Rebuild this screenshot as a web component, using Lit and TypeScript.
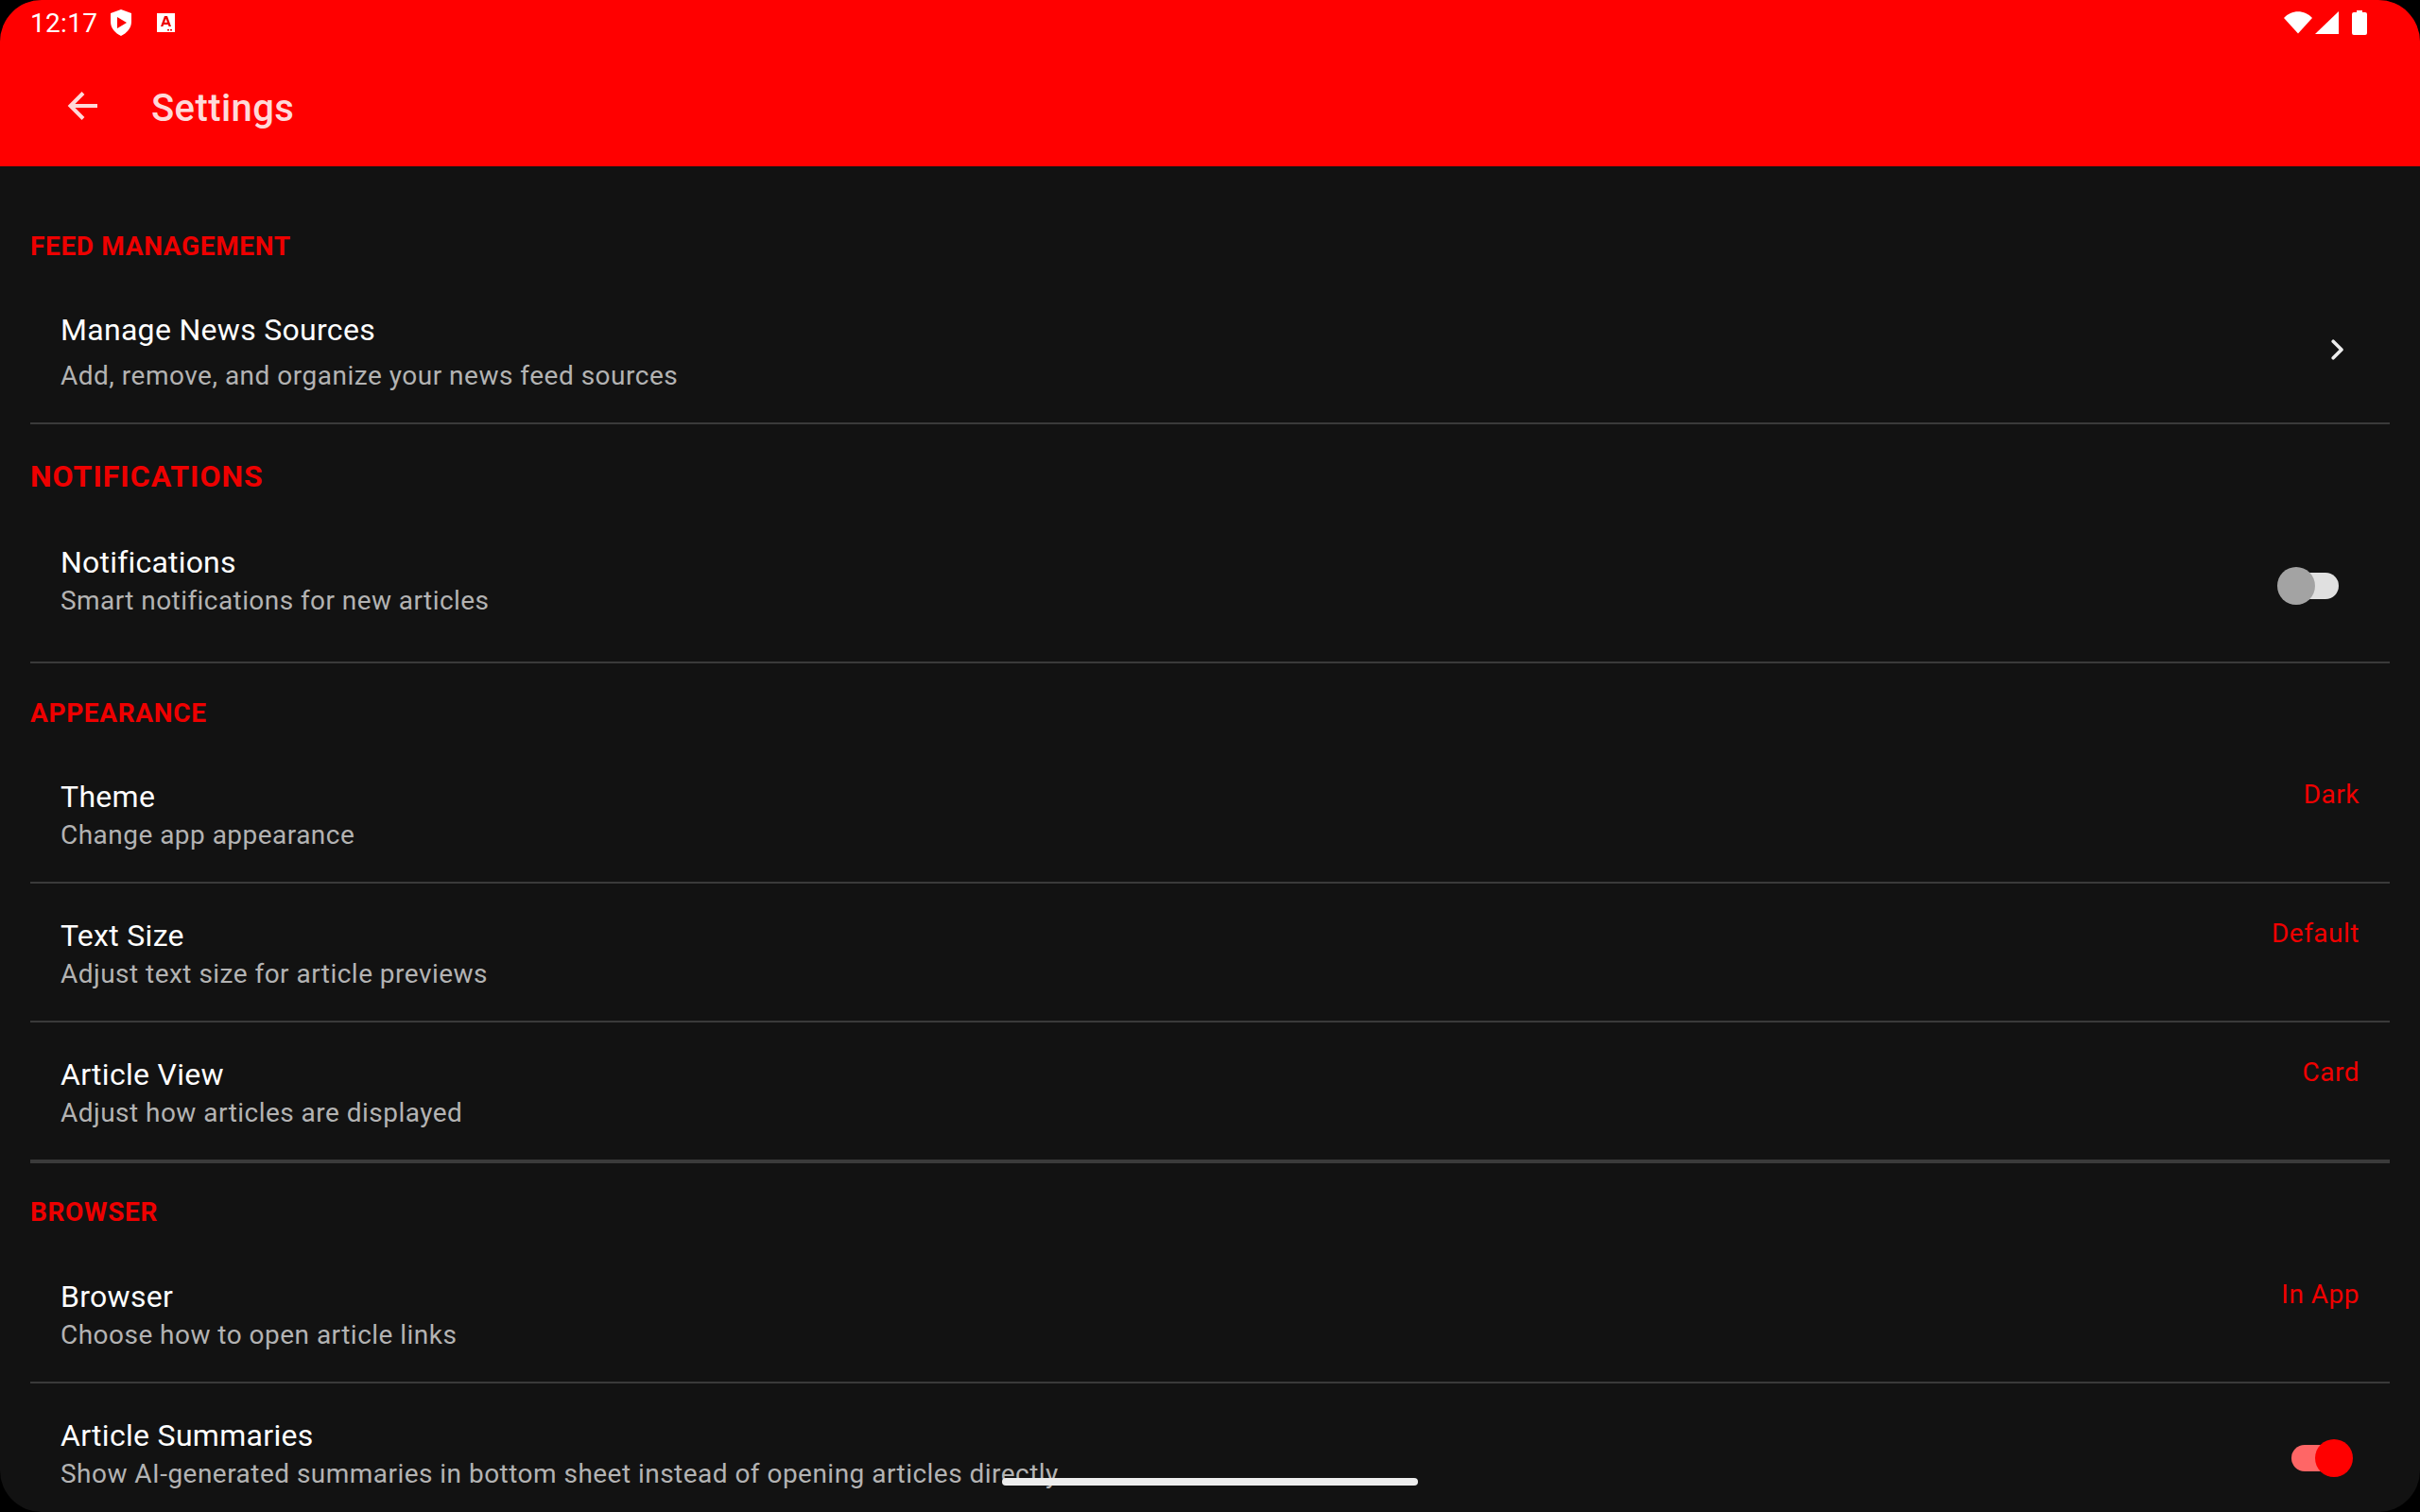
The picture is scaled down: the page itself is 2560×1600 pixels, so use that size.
import { LitElement, html, css, nothing } from "lit";
import { customElement } from "lit/decorators.js";

type Row = { t: string; s: string; cls: string; v?: string; kind?: "chev" | "off" | "on" };

const sections: { h: string; hc?: string; cls: string; rows: Row[] }[] = [
  { h: "FEED MANAGEMENT", cls: "s1", rows: [{ t: "Manage News Sources", s: "Add, remove, and organize your news feed sources", cls: "r-manage", kind: "chev" }] },
  { h: "NOTIFICATIONS", hc: "big", cls: "s2", rows: [{ t: "Notifications", s: "Smart notifications for new articles", cls: "r-notif", kind: "off" }] },
  {
    h: "APPEARANCE", cls: "s3", rows: [
      { t: "Theme", s: "Change app appearance", cls: "r", v: "Dark" },
      { t: "Text Size", s: "Adjust text size for article previews", cls: "r", v: "Default" },
      { t: "Article View", s: "Adjust how articles are displayed", cls: "r", v: "Card" },
    ],
  },
  {
    h: "BROWSER", cls: "s4", rows: [
      { t: "Browser", s: "Choose how to open article links", cls: "r", v: "In App" },
      { t: "Article Summaries", s: "Show AI-generated summaries in bottom sheet instead of opening articles directly", cls: "r r-sum", kind: "on" },
    ],
  },
];

@customElement("app-root")
export class AppRoot extends LitElement {
  static styles = css`
    :host { display: block; width: 2560px; height: 1600px; background: #000; font-family: Roboto, "Liberation Sans", sans-serif; }
    .screen { position: relative; width: 2560px; height: 1600px; background: #121212; border-radius: 44px; overflow: hidden; display: flex; flex-direction: column; }
    .header { background: #ff0000; height: 176px; flex: none; display: flex; flex-direction: column; }
    .status { height: 48px; padding: 0 56px 0 32px; display: flex; align-items: center; color: #fff; font-size: 28px; box-sizing: border-box; }
    .time { letter-spacing: 0.3px; width: 84px; }
    .status .right { margin-left: auto; display: flex; align-items: center; }
    .aw { margin-left: 26px; }
    .signal { margin-left: 3px; }
    .batt { margin-left: 14px; }
    .toolbar { flex: 1; display: flex; align-items: center; padding-left: 71px; color: #ffd9d9; }
    .toolbar span { font-size: 40px; font-weight: 500; margin-left: 57px; line-height: 48px; letter-spacing: 0.4px; padding-top: 6px; }
    .list { padding: 0 32px; display: flex; flex-direction: column; }
    .sec-h { color: #ee0000; font-size: 28px; font-weight: 700; line-height: 34px; letter-spacing: 0.65px; }
    .sec-h.big { font-size: 32px; line-height: 38px; letter-spacing: 1px; }
    .s1 .sec-h { margin-top: 68px; }
    .s2 .sec-h { margin-top: 36px; }
    .s3 .sec-h { margin-top: 36px; margin-bottom: 1px; }
    .s4 .sec-h { margin-top: 35px; margin-bottom: 2px; }
    .row { display: flex; align-items: flex-start; padding: 0 32px; box-sizing: border-box; border-bottom: 2px solid #3a3a3a; }
    .r-sum { border-bottom: none; }
    .texts { flex: 1; min-width: 0; }
    .t { color: #fff; font-size: 32px; line-height: 40px; letter-spacing: 0.3px; }
    .st { color: #b3b3b3; font-size: 28px; line-height: 36px; letter-spacing: 0.47px; white-space: nowrap; }
    .val { color: #f00000; font-size: 28px; line-height: 36px; letter-spacing: 0.5px; }
    .r { height: 147px; padding-top: 35px; }
    .r .st { margin-top: 3px; }
    .r .val { margin-top: 0; }
    .s3 .sec-h + .row { height: 162px; padding-top: 50px; }
    .s4 .sec-h + .row { height: 162px; padding-top: 50px; }
    .s3 .row:last-child { height: 149px; border-bottom-width: 4px; }
    .r-manage { height: 171px; padding-top: 51px; }
    .r-manage .st { margin-top: 11px; letter-spacing: 0.5px; }
    .r-notif { height: 179px; padding-top: 52px; }
    .r-notif .t { letter-spacing: 0.2px; }
    .r-notif .st { margin-top: 3px; letter-spacing: 0.43px; }
    .chev { margin-top: 30px; margin-right: 16px; }
    .sw { position: relative; flex: none; width: 65px; height: 40px; }
    .sw .track { position: absolute; border-radius: 14px; height: 28px; width: 56px; top: 6px; }
    .sw .thumb { position: absolute; width: 40px; height: 40px; border-radius: 50%; top: 0; }
    .sw.off { margin-top: 25px; margin-right: 22px; }
    .sw.off .track { background: #e0e0e0; left: 9px; }
    .sw.off .thumb { background: #a3a3a3; left: 0; }
    .sw.on { margin-top: 24px; margin-right: 7px; }
    .sw.on .track { background: #ff6666; left: 0; }
    .sw.on .thumb { background: #ff0000; left: 25px; }
    .home { position: absolute; left: 1060px; top: 1564px; width: 440px; height: 8px; border-radius: 4px; background: #ededed; }
  `;

  private trailing(r: Row) {
    if (r.v) return html`<div class="val">${r.v}</div>`;
    if (r.kind === "chev") return html`<svg class="chev" width="14" height="22" viewBox="0 0 14 22"><path d="M2.2 2.2 L11 11 L2.2 19.8" fill="none" stroke="#ececec" stroke-width="3.6" stroke-linecap="round" stroke-linejoin="round"/></svg>`;
    if (r.kind === "off" || r.kind === "on") return html`<div class="sw ${r.kind}"><div class="track"></div><div class="thumb"></div></div>`;
    return nothing;
  }

  render() {
    return html`<div class="screen">
      <div class="header">
        <div class="status">
          <span class="time">12:17</span>
          <svg width="24" height="28" viewBox="0 0 24 28"><path fill-rule="evenodd" fill="#fff" d="M12 0 L23 4 V13 C23 20 18 25 12 28 C6 25 1 20 1 13 V4 Z M8 8 V20 L18 14 Z"/></svg>
          <svg class="aw" width="19" height="20" viewBox="0 0 19 20"><rect width="19" height="20" fill="#fff"/><path d="M4 14 L8 3 H11 L15 14 H12.6 L11.9 12 H7.1 L6.4 14 Z M8 9.8 H11 L9.5 5.8 Z" fill="#e00" fill-rule="evenodd"/><rect x="11" y="17" width="2" height="1.5" fill="#e00"/><rect x="14" y="17" width="2" height="1.5" fill="#e00"/></svg>
          <div class="right">
            <svg width="30" height="24" viewBox="0 0 30 24"><path fill="#fff" d="M0 7 C8 -2 22 -2 30 7 L15 23.5 Z"/></svg>
            <svg class="signal" width="25" height="24" viewBox="0 0 25 24"><path fill="#fff" d="M25 0 V24 H0 Z"/></svg>
            <svg class="batt" width="16" height="26" viewBox="0 0 16 26"><path fill="#fff" d="M5 0 H11 V2 H14 Q16 2 16 4 V24 Q16 26 14 26 H2 Q0 26 0 24 V4 Q0 2 2 2 H5 Z"/></svg>
          </div>
        </div>
        <div class="toolbar">
          <svg width="32" height="32" viewBox="0 0 32 32"><path d="M32 16 H4 M17 2.5 L3.5 16 L17 29.5" fill="none" stroke="#ffd9d9" stroke-width="4"/></svg>
          <span>Settings</span>
        </div>
      </div>
      <div class="list">
        ${sections.map((s) => html`<div class="sec ${s.cls}">
          <div class="sec-h ${s.hc ?? ""}">${s.h}</div>
          ${s.rows.map((r) => html`<div class="row ${r.cls}">
            <div class="texts"><div class="t">${r.t}</div><div class="st">${r.s}</div></div>
            ${this.trailing(r)}
          </div>`)}
        </div>`)}
      </div>
      <div class="home"></div>
    </div>`;
  }
}
